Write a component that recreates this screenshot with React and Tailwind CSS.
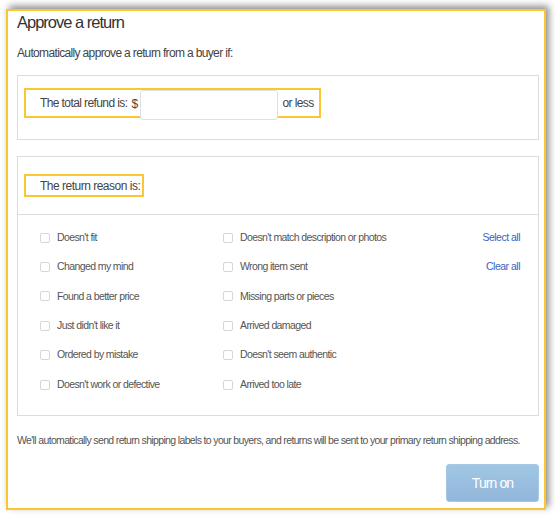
const reasonsLeft = [
  "Doesn't fit",
  "Changed my mind",
  "Found a better price",
  "Just didn't like it",
  "Ordered by mistake",
  "Doesn't work or defective",
];

const reasonsRight = [
  "Doesn't match description or photos",
  "Wrong item sent",
  "Missing parts or pieces",
  "Arrived damaged",
  "Doesn't seem authentic",
  "Arrived too late",
];

const font = {
  fontFamily: '"Liberation Sans", Arial, sans-serif',
};

const Check = ({ label }) => (
  <label className="flex items-center h-[29.4px] text-[10.5px] tracking-[-0.6px] text-[#555]">
    <span className="w-[10px] h-[10px] border border-[#d6d6d6] rounded-[2px] bg-white mr-[7px] shrink-0" />
    {label}
  </label>
);

const App = () => {
  return (
    <div className="w-[555px] h-[519px] bg-white pt-[9px] pl-[6px]" style={font}>

      <div className="w-[540px] h-[501px] border-2 border-[#fbc634] bg-white pl-[9px] pr-[5px] shadow-[3px_-3px_7px_rgba(0,0,0,0.45)]">

        <h2 className="text-[16.5px] leading-[23px] tracking-[-1px] text-[#333]">
          Approve a return
        </h2>

        <p className="text-[12px] leading-[16px] tracking-[-0.65px] text-[#444] mt-[11px]">
          Automatically approve a return from a buyer if:
        </p>

        <div className="border border-[#dcdcdc] mt-[14px] h-[65px] pt-[12px] pl-[6px]">
          <div className="flex items-start w-[297px] h-[30px] border-2 border-[#fbc634] pl-[14px] text-[12px] tracking-[-0.6px] text-[#444]">
            <span className="leading-[26px] whitespace-nowrap">The total refund is:</span>
            <span className="leading-[26px] ml-[4px] mr-[3px] mt-[1px]">$</span>
            <div className="w-[138px] h-[30px] border border-[#e0e0e0] rounded-[3px] bg-white shrink-0" />
            <span className="leading-[26px] ml-[4px] whitespace-nowrap">or less</span>
          </div>
        </div>

        <div className="border border-[#dcdcdc] mt-[16px] h-[260px]">
          <div className="h-[58px] border-b border-[#dcdcdc] pt-[17px] pl-[6px]">
            <div className="flex items-center w-[120px] h-[23px] border-2 border-[#fbc634] pl-[14px] text-[12px] tracking-[-0.5px] text-[#444] whitespace-nowrap">
              The return reason is:
            </div>
          </div>

          <div className="flex pt-[8px] pl-[22px] pr-[18px]">
            <div className="w-[183px]">
              {reasonsLeft.map((r) => (
                <Check key={r} label={r} />
              ))}
            </div>
            <div className="flex-1">
              {reasonsRight.map((r) => (
                <Check key={r} label={r} />
              ))}
            </div>
            <div className="flex flex-col items-end text-[10.5px] tracking-[-0.5px] text-[#3b63c4]">
              <span className="h-[29.4px] flex items-center">Select all</span>
              <span className="h-[29.4px] flex items-center">Clear all</span>
            </div>
          </div>
        </div>

        <p className="text-[10.5px] leading-[14px] tracking-[-0.65px] text-[#555] mt-[17px] whitespace-nowrap">
          We'll automatically send return shipping labels to your buyers, and returns will be sent to your primary return shipping address.
        </p>

        <div className="flex justify-end mt-[17px]">
          <button className="w-[93px] h-[38px] rounded-[3px] border border-[#a6c8e4] bg-gradient-to-b from-[#9fc7e5] to-[#93b6da] text-white text-[14px] tracking-[-0.9px]">
            Turn on
          </button>
        </div>

      </div>

    </div>
  );
};

export default App;
